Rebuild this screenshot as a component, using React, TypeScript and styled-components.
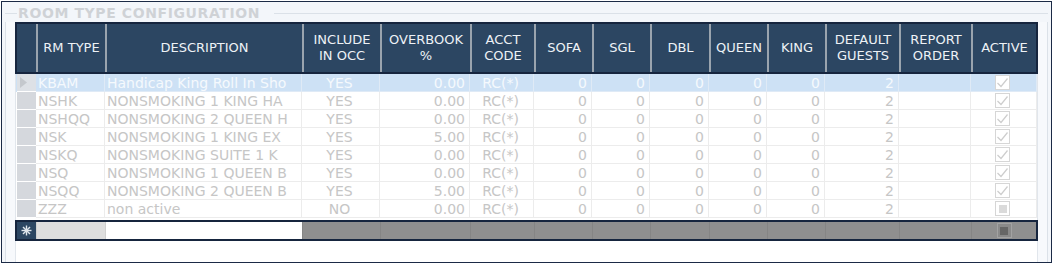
import React from 'react';
import styled, { createGlobalStyle, css } from 'styled-components';

const GlobalStyle = createGlobalStyle`
  html, body {
    margin: 0;
    padding: 0;
    background: #ffffff;
  }
  body {
    font-family: 'DejaVu Sans', Verdana, sans-serif;
  }
`;

const BODY_COLS = '20px 69px 197px 78px 90px 64px 58px 58px 59px 58px 58px 74px 72px 66px';
const HEAD_COLS = '19px 69px 197px 78px 90px 64px 58px 58px 59px 58px 58px 74px 72px 65px';

type Align = 'left' | 'center' | 'right';

interface Column {
  title: string[];
  align: Align;
}

const COLUMNS: Column[] = [
  { title: ['RM TYPE'], align: 'left' },
  { title: ['DESCRIPTION'], align: 'left' },
  { title: ['INCLUDE', 'IN OCC'], align: 'center' },
  { title: ['OVERBOOK', '%'], align: 'right' },
  { title: ['ACCT', 'CODE'], align: 'center' },
  { title: ['SOFA'], align: 'right' },
  { title: ['SGL'], align: 'right' },
  { title: ['DBL'], align: 'right' },
  { title: ['QUEEN'], align: 'right' },
  { title: ['KING'], align: 'right' },
  { title: ['DEFAULT', 'GUESTS'], align: 'right' },
  { title: ['REPORT', 'ORDER'], align: 'right' },
];

type CheckState = 'checked' | 'partial';

interface RoomType {
  code: string;
  description: string;
  includeInOcc: string;
  overbook: string;
  active: CheckState;
}

const ROOM_TYPES: RoomType[] = [
  { code: 'KBAM', description: 'Handicap King Roll In Sho', includeInOcc: 'YES', overbook: '0.00', active: 'checked' },
  { code: 'NSHK', description: 'NONSMOKING 1 KING HA', includeInOcc: 'YES', overbook: '0.00', active: 'checked' },
  { code: 'NSHQQ', description: 'NONSMOKING 2 QUEEN H', includeInOcc: 'YES', overbook: '0.00', active: 'checked' },
  { code: 'NSK', description: 'NONSMOKING 1 KING EX', includeInOcc: 'YES', overbook: '5.00', active: 'checked' },
  { code: 'NSKQ', description: 'NONSMOKING SUITE 1 K', includeInOcc: 'YES', overbook: '0.00', active: 'checked' },
  { code: 'NSQ', description: 'NONSMOKING 1 QUEEN B', includeInOcc: 'YES', overbook: '0.00', active: 'checked' },
  { code: 'NSQQ', description: 'NONSMOKING 2 QUEEN B', includeInOcc: 'YES', overbook: '5.00', active: 'checked' },
  { code: 'ZZZ', description: 'non active', includeInOcc: 'NO', overbook: '0.00', active: 'partial' },
];

const Frame = styled.div`
  box-sizing: border-box;
  margin: 1px 0 0 1px;
  width: 1051px;
  height: 262px;
  border: 1px solid #1b2a46;
  background: #f3f6fa;
  padding: 3px 3px 0 3px;
  display: flex;
`;

const GroupBox = styled.div`
  flex: 1;
  display: flex;
  flex-direction: column;
`;

const TitleRow = styled.div`
  display: flex;
  align-items: center;
  height: 17px;
`;

const TitleLine = styled.div<{ $grow?: boolean }>`
  height: 1px;
  background: #dbe1e8;
  ${({ $grow }) =>
    $grow
      ? css`
          flex: 1;
        `
      : css`
          width: 12px;
        `}
`;

const Title = styled.span`
  font-family: 'DejaVu Sans', Verdana, sans-serif;
  font-weight: bold;
  font-size: 14px;
  letter-spacing: 0.6px;
  color: #cfd2d6;
  padding: 0 14px 0 1px;
  line-height: 17px;
`;

const GroupBody = styled.div`
  flex: 1;
  display: flex;
  border-left: 1px solid #dbe1e8;
  border-right: 1px solid #dbe1e8;
  background: #f7f9fc;
  padding: 0 8px 0 9px;
`;

const Grid = styled.div`
  width: 1023px;
  display: flex;
  flex-direction: column;
`;

const Header = styled.div`
  display: grid;
  grid-template-columns: ${HEAD_COLS};
  height: 52px;
  box-sizing: border-box;
  border: 2px solid #16253e;
  background: #2c4662;
`;

const HeadCell = styled.div<{ $first?: boolean }>`
  display: flex;
  flex-direction: column;
  align-items: center;
  justify-content: center;
  border-left: ${({ $first }) => ($first ? 'none' : '2px solid #9aa4ae')};
  color: #eef2f6;
  font-size: 13px;
  line-height: 16px;
  text-align: center;
  white-space: nowrap;
`;

const Body = styled.div`
  flex: 1;
  display: flex;
  flex-direction: column;
  background: #ffffff;
  border-left: 1px solid #e1e6ec;
  border-right: 1px solid #e1e6ec;
`;

const Row = styled.div<{ $selected?: boolean }>`
  display: grid;
  grid-template-columns: ${BODY_COLS};
  height: 18px;
  background: ${({ $selected }) => ($selected ? '#cde1f5' : '#ffffff')};
  color: ${({ $selected }) => ($selected ? '#f5f9fd' : '#c6c6c6')};
`;

const Cell = styled.div<{ $align: Align; $selected?: boolean }>`
  box-sizing: border-box;
  display: flex;
  align-items: center;
  justify-content: ${({ $align }) =>
    $align === 'left' ? 'flex-start' : $align === 'right' ? 'flex-end' : 'center'};
  padding: 0 4px 0 2px;
  font-size: 14px;
  white-space: nowrap;
  overflow: hidden;
  border-right: 1px solid ${({ $selected }) => ($selected ? '#dfeaf6' : '#ececec')};
  border-bottom: 1px solid ${({ $selected }) => ($selected ? '#dfeaf6' : '#ececec')};
`;

const Selector = styled.div<{ $selected?: boolean }>`
  box-sizing: border-box;
  display: flex;
  align-items: center;
  padding-left: 3px;
  margin-left: 1px;
  background: ${({ $selected }) => ($selected ? '#dde1e6' : '#d5d8dd')};
  border-bottom: 1px solid #ffffff;
`;

const NewRow = styled.div`
  display: grid;
  grid-template-columns: ${HEAD_COLS};
  height: 21px;
  margin-top: 2px;
  box-sizing: border-box;
  border: 2px solid #16253e;
  margin-left: -1px;
  margin-right: -1px;
  background: #8f8f8f;
`;

const NewCell = styled.div<{ $tone: 'navy' | 'light' | 'white' | 'dark' }>`
  display: flex;
  align-items: center;
  justify-content: center;
  ${({ $tone }) =>
    $tone === 'navy'
      ? css`
          background: #2c4662;
        `
      : $tone === 'light'
        ? css`
            background: #dedede;
            border-left: 1px solid #d0d0d0;
          `
        : $tone === 'white'
          ? css`
              background: #ffffff;
              border-left: 1px solid #d0d0d0;
            `
          : css`
              background: #8f8f8f;
              border-left: 1px solid #858585;
            `}
`;

const Box = styled.div<{ $dark?: boolean }>`
  box-sizing: border-box;
  width: 15px;
  height: 15px;
  display: flex;
  align-items: center;
  justify-content: center;
  border: 1px solid ${({ $dark }) => ($dark ? '#a2a2a2' : '#d6d6d6')};
  background: ${({ $dark }) => ($dark ? '#8a8a8a' : '#ffffff')};
`;

const Fill = styled.div<{ $dark?: boolean }>`
  width: 8px;
  height: 8px;
  background: ${({ $dark }) => ($dark ? '#666666' : '#dadada')};
`;

const CheckBox: React.FC<{ state: CheckState | 'new' }> = ({ state }) => {
  if (state === 'checked') {
    return (
      <Box>
        <svg width="13" height="13" viewBox="0 0 13 13">
          <path d="M1.5 7 L5 10.5 L11.5 2.5" fill="none" stroke="#cdcdcd" strokeWidth="1.2" />
        </svg>
      </Box>
    );
  }
  return (
    <Box $dark={state === 'new'}>
      <Fill $dark={state === 'new'} />
    </Box>
  );
};

const RowArrow = () => (
  <svg width="7" height="11" viewBox="0 0 7 11">
    <polygon points="0,0 7,5.5 0,11" fill="#c4c8cd" />
  </svg>
);

const NewRowStar = () => (
  <svg width="11" height="11" viewBox="0 0 11 11">
    <g stroke="#dfe5ec" strokeWidth="1.4">
      <line x1="5.5" y1="0.5" x2="5.5" y2="10.5" />
      <line x1="0.5" y1="5.5" x2="10.5" y2="5.5" />
      <line x1="2" y1="2" x2="9" y2="9" />
      <line x1="9" y1="2" x2="2" y2="9" />
    </g>
  </svg>
);

const RoomRow: React.FC<{ room: RoomType; selected?: boolean }> = ({ room, selected }) => {
  const values = [
    room.code,
    room.description,
    room.includeInOcc,
    room.overbook,
    'RC(*)',
    '0',
    '0',
    '0',
    '0',
    '0',
    '2',
    '',
  ];
  return (
    <Row $selected={selected}>
      <Selector $selected={selected}>{selected && <RowArrow />}</Selector>
      {values.map((v, i) => (
        <Cell key={i} $align={COLUMNS[i].align} $selected={selected}>
          {v}
        </Cell>
      ))}
      <Cell $align="center" $selected={selected}>
        <CheckBox state={room.active} />
      </Cell>
    </Row>
  );
};

const App: React.FC = () => {
  return (
    <>
      <GlobalStyle />
      <Frame>
        <GroupBox>
          <TitleRow>
            <TitleLine />
            <Title>ROOM TYPE CONFIGURATION</Title>
            <TitleLine $grow />
          </TitleRow>
          <GroupBody>
            <Grid>
              <Header>
                <HeadCell $first />
                {COLUMNS.map(col => (
                  <HeadCell key={col.title.join(' ')}>
                    {col.title.map(line => (
                      <span key={line}>{line}</span>
                    ))}
                  </HeadCell>
                ))}
                <HeadCell>ACTIVE</HeadCell>
              </Header>
              <Body>
                {ROOM_TYPES.map((room, i) => (
                  <RoomRow key={room.code} room={room} selected={i === 0} />
                ))}
                <NewRow>
                  <NewCell $tone="navy">
                    <NewRowStar />
                  </NewCell>
                  <NewCell $tone="light" />
                  <NewCell $tone="white" />
                  {COLUMNS.slice(2).map(col => (
                    <NewCell key={col.title.join(' ')} $tone="dark" />
                  ))}
                  <NewCell $tone="dark">
                    <CheckBox state="new" />
                  </NewCell>
                </NewRow>
              </Body>
            </Grid>
          </GroupBody>
        </GroupBox>
      </Frame>
    </>
  );
};

export default App;
